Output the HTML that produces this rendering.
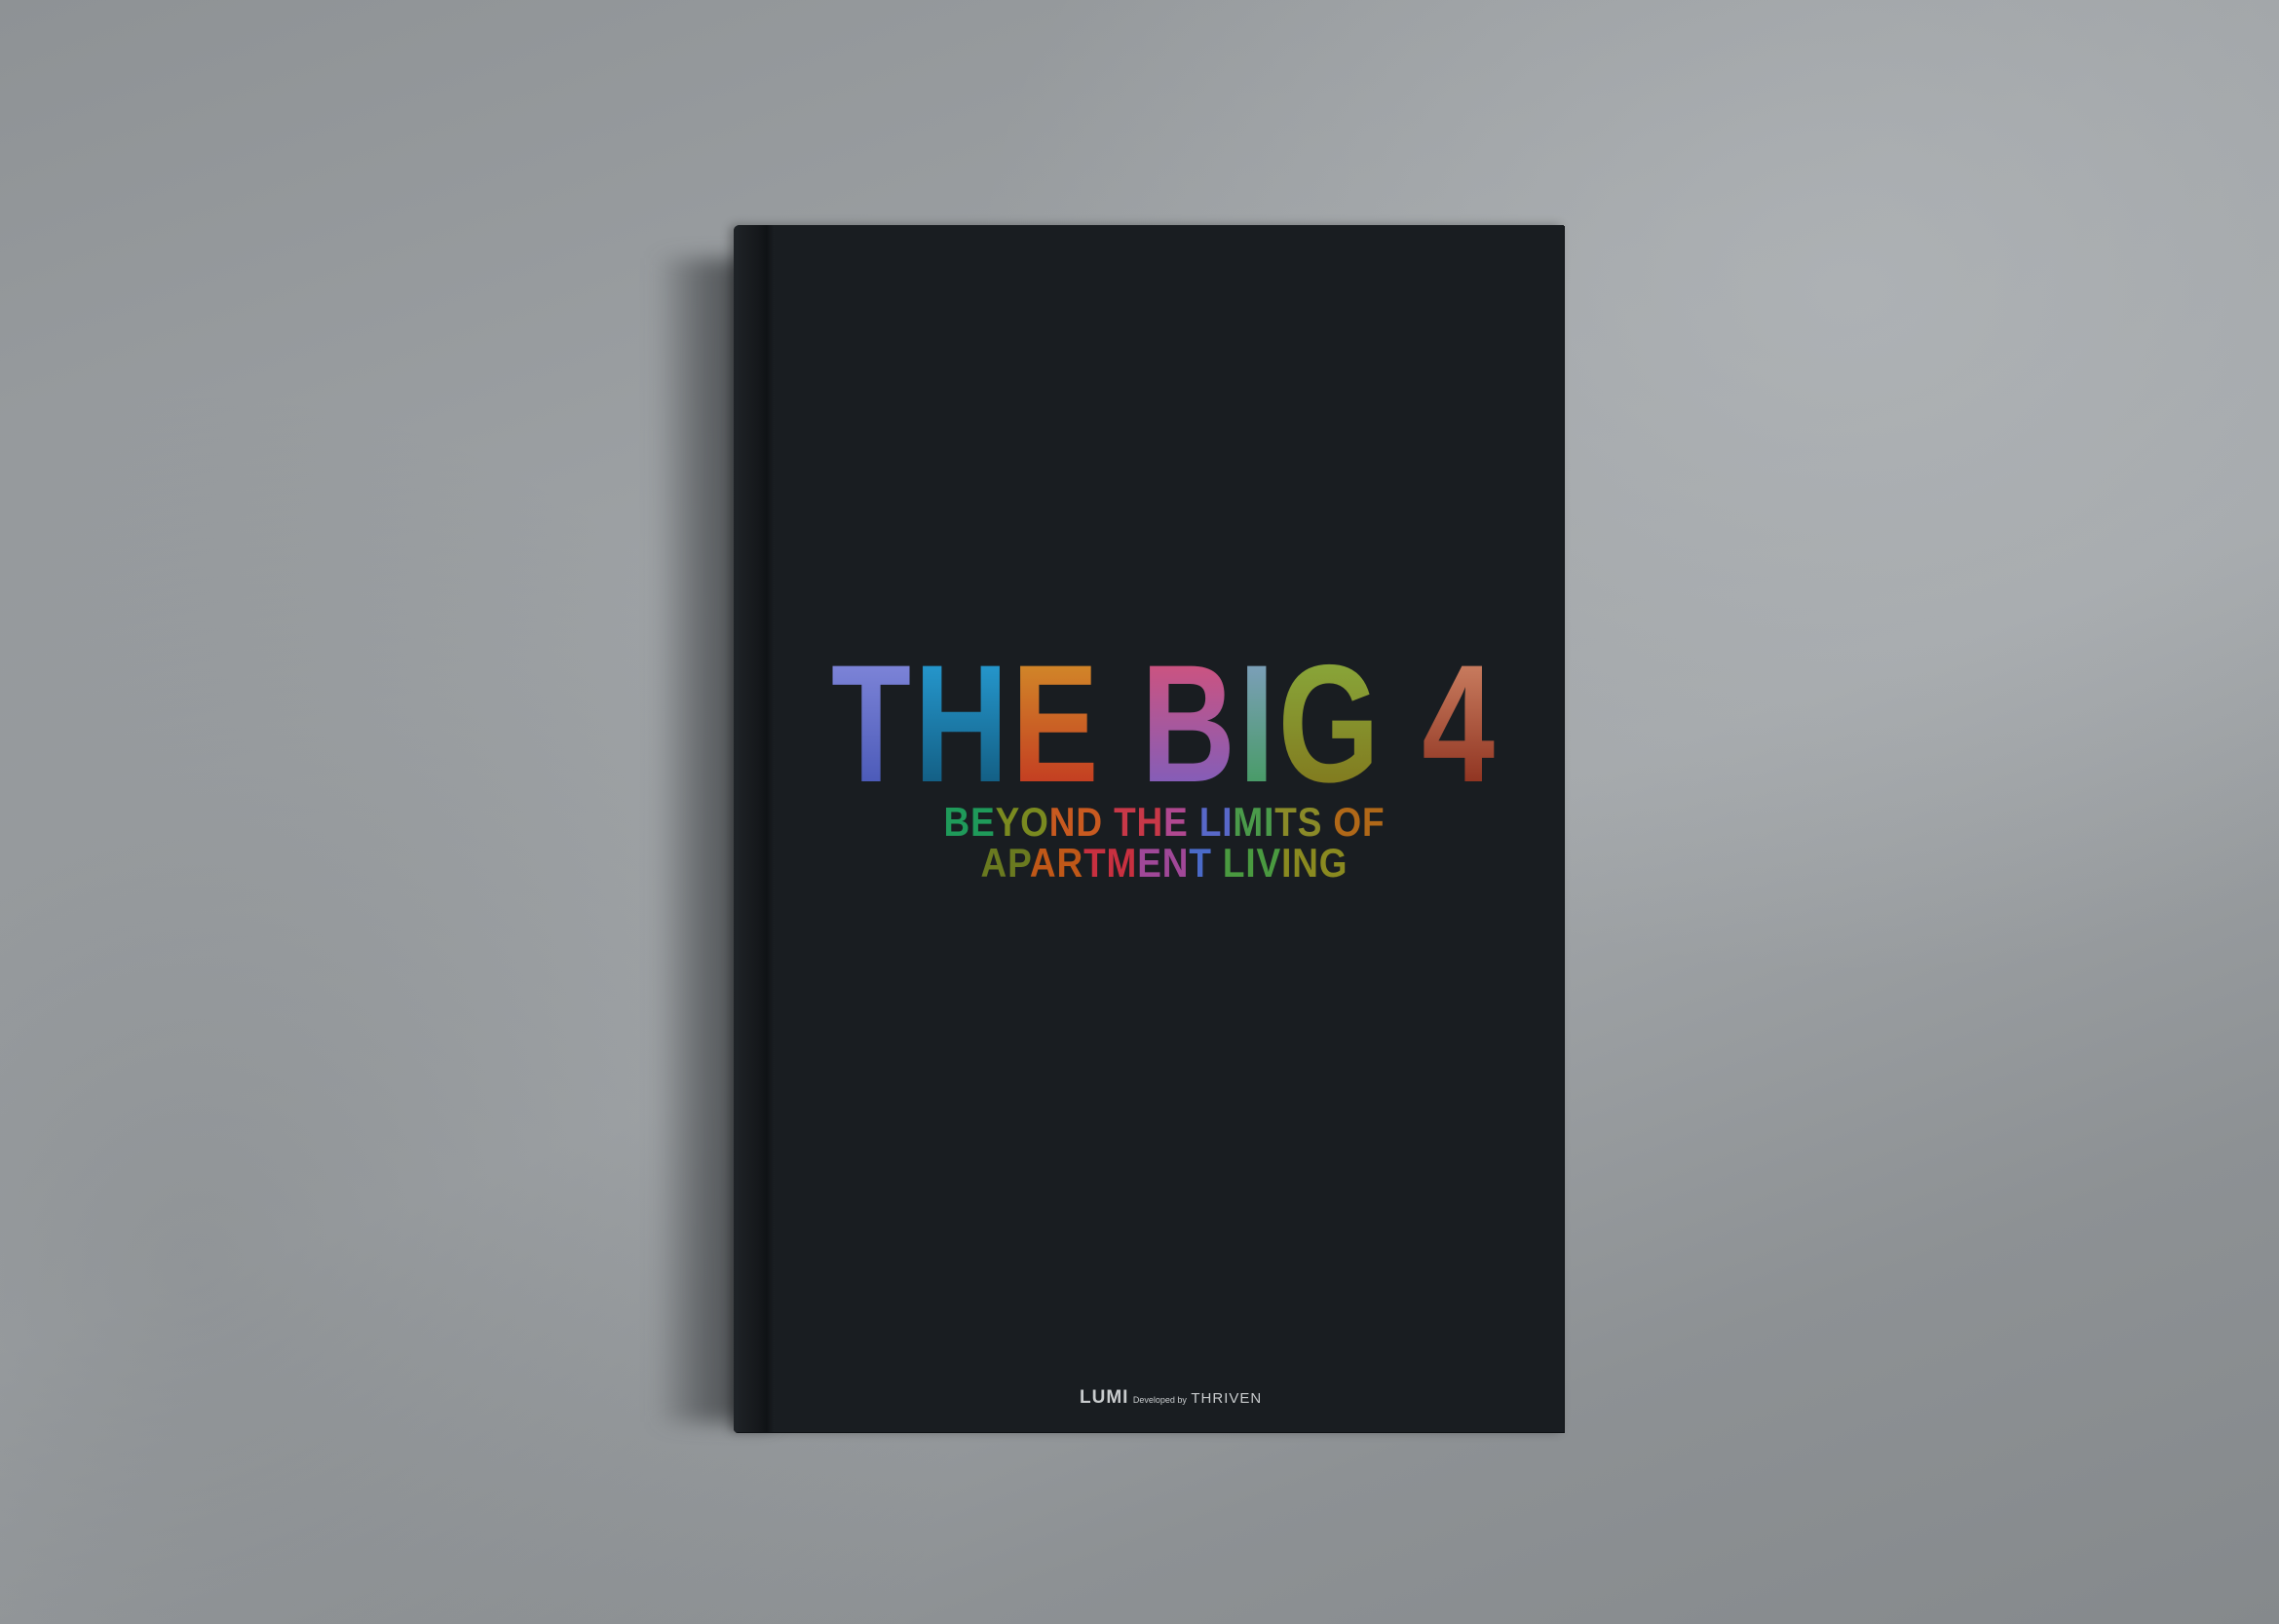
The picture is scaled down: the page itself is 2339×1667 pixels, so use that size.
<!DOCTYPE html>
<html><head><meta charset="utf-8"><style>
html,body{margin:0;padding:0;width:2339px;height:1667px;overflow:hidden}
body{position:relative;background:linear-gradient(160deg,#8e9295 0%,#9ea2a5 35%,#a3a7aa 55%,#8d9194 80%,#85898c 100%)}
.bg2{position:absolute;inset:0;background:radial-gradient(ellipse 900px 700px at 1900px 300px,rgba(185,189,192,.55),rgba(0,0,0,0));}
.bg3{position:absolute;inset:0;background:radial-gradient(ellipse 800px 900px at 200px 1300px,rgba(110,114,117,.35),rgba(0,0,0,0));}
.shadow{position:absolute;left:672px;top:265px;width:120px;height:1195px;background:linear-gradient(90deg,rgba(60,63,66,0) 0%,rgba(60,63,66,.55) 40%,rgba(45,48,51,.85) 100%);filter:blur(10px)}
.book{position:absolute;left:753px;top:231px;width:852px;height:1239px;background:#191d21;border-radius:6px 0 0 3px;box-shadow:1px 1px 0 #0e1114,-4px 0 10px rgba(0,0,0,.3)}
.spine{position:absolute;left:0;top:0;width:42px;height:100%;background:linear-gradient(90deg,#1f2327 0%,#15181b 60%,#0f1215 80%,#1a1e22 100%);border-radius:6px 0 0 3px}
.title{position:absolute;height:160px;font-family:"Liberation Sans",sans-serif;font-weight:bold;font-size:172px;line-height:160px;white-space:nowrap;transform:scaleX(.78);transform-origin:0 0;letter-spacing:4px}
.title span{-webkit-background-clip:text;background-clip:text;color:transparent}
.sub{position:absolute;left:16px;width:852px;text-align:center;font-family:"Liberation Sans",sans-serif;font-weight:bold;font-size:42px;line-height:42px;letter-spacing:1px;transform:scaleX(.88);transform-origin:426px 0;white-space:nowrap}
.logo{position:absolute;left:355px;top:1193px;font-family:"Liberation Sans",sans-serif;color:#c9ccce;white-space:nowrap}
</style></head><body>
<div class="bg2"></div><div class="bg3"></div>
<div class="shadow"></div>
<div class="book">
<div class="spine"></div>
<div class="title" style="left:100px;top:432px">
<span style="background-image:linear-gradient(180deg,#8a8fe0,#3e4fb0)">T</span><span style="background-image:linear-gradient(180deg,#2aa6e0,#0e4f70)">H</span><span style="background-image:linear-gradient(180deg,#d59a2a,#c02a20)">E</span> <span style="background-image:linear-gradient(180deg,#e05070,#7060c8)">B</span><span style="background-image:linear-gradient(180deg,#8aa0d0,#3a9a50)">I</span><span style="background-image:linear-gradient(180deg,#8ab040,#807018)">G</span> <span style="background-image:linear-gradient(180deg,#d89070,#802010)">4</span>
</div>
<div class="sub" style="top:592px"><span style="color:#1f9a5a">BE</span><span style="color:#7a8a20">YO</span><span style="color:#c85a20">ND</span> <span style="color:#c83848">TH</span><span style="color:#b04890">E</span> <span style="color:#5868c8">LI</span><span style="color:#4a9a4a">MI</span><span style="color:#8a8a28">TS</span> <span style="color:#b06818">OF</span></div>
<div class="sub" style="top:634px"><span style="color:#6a7a20">AP</span><span style="color:#c05818">AR</span><span style="color:#c83040">TM</span><span style="color:#a04898">EN</span><span style="color:#4a6ac8">T</span> <span style="color:#4a9a40">LIV</span><span style="color:#8a8a20">ING</span></div>
<div class="logo"><span style="font-size:19px;letter-spacing:1px;font-weight:bold">LUMI</span> <span style="font-size:9px">Developed by</span> <span style="font-size:15px;letter-spacing:1px">THRIVEN</span></div>
</div>
</body></html>
